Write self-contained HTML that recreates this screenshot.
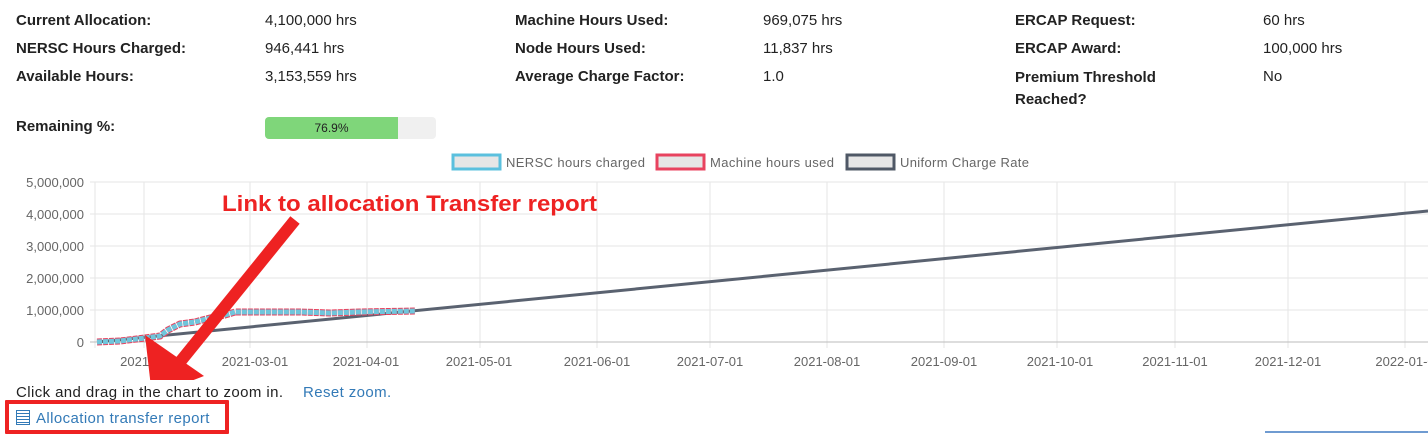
<!DOCTYPE html>
<html><head><style>
body{margin:0;width:1428px;height:433px;overflow:hidden;background:#fff;font-family:"Liberation Sans",Arial,sans-serif;color:#222;position:relative}
.t{position:absolute;font-size:15px;line-height:18px}
.b{font-weight:bold}
</style></head><body>
<div class="t b" style="left:16px;top:12px">Current Allocation:</div>
<div class="t" style="left:265px;top:12px">4,100,000 hrs</div>
<div class="t b" style="left:515px;top:12px">Machine Hours Used:</div>
<div class="t" style="left:763px;top:12px">969,075 hrs</div>
<div class="t b" style="left:1015px;top:12px">ERCAP Request:</div>
<div class="t" style="left:1263px;top:12px">60 hrs</div>
<div class="t b" style="left:16px;top:40px">NERSC Hours Charged:</div>
<div class="t" style="left:265px;top:40px">946,441 hrs</div>
<div class="t b" style="left:515px;top:40px">Node Hours Used:</div>
<div class="t" style="left:763px;top:40px">11,837 hrs</div>
<div class="t b" style="left:1015px;top:40px">ERCAP Award:</div>
<div class="t" style="left:1263px;top:40px">100,000 hrs</div>
<div class="t b" style="left:16px;top:68px">Available Hours:</div>
<div class="t" style="left:265px;top:68px">3,153,559 hrs</div>
<div class="t b" style="left:515px;top:68px">Average Charge Factor:</div>
<div class="t" style="left:763px;top:68px">1.0</div>
<div class="t b" style="left:1015px;top:67px;line-height:22px">Premium Threshold<br>Reached?</div>
<div class="t" style="left:1263px;top:68px">No</div>
<div class="t b" style="left:16px;top:118px">Remaining %:</div>
<div style="position:absolute;left:265px;top:117px;width:171px;height:22px;background:#f0f0f0;border-radius:4px;overflow:hidden">
<div style="width:133px;height:22px;background:#7fd67a;text-align:center;font-size:12px;line-height:22px;color:#222">76.9%</div></div>
<svg style="position:absolute;left:0;top:140px" width="1428" height="240" font-family="Liberation Sans,Arial,sans-serif">
<g font-size="13" fill="#666">
<rect x="453" y="15" width="47" height="14" fill="#e6e6e6" stroke="#5bc0de" stroke-width="3"/><text x="506" y="27" textLength="139">NERSC hours charged</text>
<rect x="657" y="15" width="47" height="14" fill="#e6e6e6" stroke="#e8435f" stroke-width="3"/><text x="710" y="27" textLength="124">Machine hours used</text>
<rect x="847" y="15" width="47" height="14" fill="#e6e6e6" stroke="#4f5866" stroke-width="3"/><text x="900" y="27" textLength="129">Uniform Charge Rate</text>
</g>
<g stroke="#e6e6e6" stroke-width="1">
<line x1="90" x2="1428" y1="42" y2="42"/><line x1="90" x2="1428" y1="74" y2="74"/><line x1="90" x2="1428" y1="106" y2="106"/><line x1="90" x2="1428" y1="138" y2="138"/><line x1="90" x2="1428" y1="170" y2="170"/>
<line x1="95" x2="95" y1="42" y2="208"/>
<line x1="144" x2="144" y1="42" y2="208"/><line x1="250" x2="250" y1="42" y2="208"/><line x1="367" x2="367" y1="42" y2="208"/><line x1="480" x2="480" y1="42" y2="208"/><line x1="597" x2="597" y1="42" y2="208"/><line x1="710" x2="710" y1="42" y2="208"/><line x1="827" x2="827" y1="42" y2="208"/><line x1="944" x2="944" y1="42" y2="208"/><line x1="1057" x2="1057" y1="42" y2="208"/><line x1="1175" x2="1175" y1="42" y2="208"/><line x1="1288" x2="1288" y1="42" y2="208"/><line x1="1405" x2="1405" y1="42" y2="208"/>
</g>
<line x1="90" x2="1428" y1="202" y2="202" stroke="#bbb"/>
<g font-size="13" fill="#666" text-anchor="end">
<text x="84" y="47">5,000,000</text><text x="84" y="79">4,000,000</text><text x="84" y="111">3,000,000</text><text x="84" y="143">2,000,000</text><text x="84" y="175">1,000,000</text><text x="84" y="207">0</text>
</g>
<g font-size="13" fill="#666" text-anchor="middle">
<text x="144" y="226">2021-02</text><text x="255" y="226">2021-03-01</text><text x="366" y="226">2021-04-01</text><text x="479" y="226">2021-05-01</text><text x="597" y="226">2021-06-01</text><text x="710" y="226">2021-07-01</text><text x="827" y="226">2021-08-01</text><text x="944" y="226">2021-09-01</text><text x="1060" y="226">2021-10-01</text><text x="1175" y="226">2021-11-01</text><text x="1288" y="226">2021-12-01</text><text x="1405" y="226">2022-01-0</text>
</g>
<line x1="97" y1="202" x2="1428" y2="71" stroke="#5a6270" stroke-width="3"/>
<polyline points="97,202 120,201 145,198 160,196 168,190 180,184 195,182 210,178 225,175 235,172 300,172 330,173 360,172 415,171" fill="none" stroke="#e8435f" stroke-width="7" stroke-dasharray="5 1"/>
<polyline points="97,202 120,201 145,198 160,196 168,190 180,184 195,182 210,178 225,175 235,172 300,172 330,173 360,172 415,171" fill="none" stroke="#6fc6dc" stroke-width="5" stroke-dasharray="5 1"/>
<text x="222" y="71" font-size="22" font-weight="bold" fill="#ee2222" textLength="375" lengthAdjust="spacingAndGlyphs">Link to allocation Transfer report</text>
<line x1="295" y1="80" x2="180" y2="222" stroke="#ee2222" stroke-width="12"/>
<polygon points="152,256 145,195 204,236" fill="#ee2222"/>
</svg>
<div class="t" style="left:16px;top:384px;font-size:15px;letter-spacing:0.4px">Click and drag in the chart to zoom in. <span style="color:#337ab7;margin-left:15px">Reset zoom.</span></div>
<div style="position:absolute;left:5px;top:400px;width:216px;height:26px;border:4px solid #ee2222;border-radius:1px"></div>
<div class="t" style="left:16px;top:410px;color:#337ab7;font-size:15px;letter-spacing:0.4px"><span style="display:inline-block;width:12px;height:13px;border:1px solid #337ab7;vertical-align:-2px;margin-right:6px;background:repeating-linear-gradient(#fff 0 2px,#337ab7 2px 3px)"></span>Allocation transfer report</div>
<div style="position:absolute;left:1265px;top:431px;width:163px;height:2px;background:#6f9bd1"></div>
</body></html>
